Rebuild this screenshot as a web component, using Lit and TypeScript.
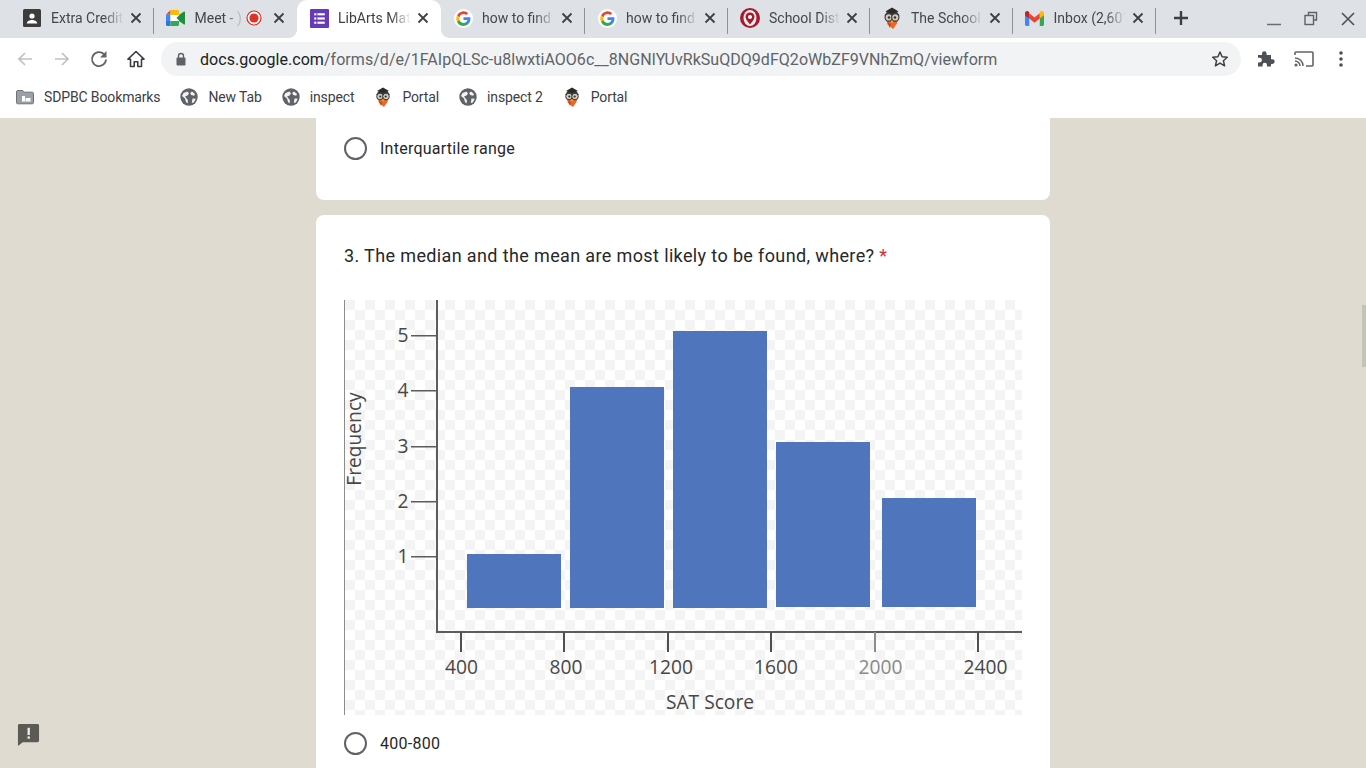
import { LitElement, html, css, svg } from "lit";
import { customElement } from "lit/decorators.js";

const googleG = svg`<svg width="19" height="19" viewBox="0 0 18 18"><circle cx="9" cy="9" r="9" fill="#fff"/><path fill="#4285f4" d="M15.6 9.2c0-.5 0-.9-.1-1.3H9v2.5h3.7a3.2 3.2 0 0 1-1.4 2.1v1.700h2.200c1.300-1.200 2.100-3 2.100-5z"/><path fill="#34a853" d="M9 16c1.900 0 3.400-.6 4.500-1.700l-2.200-1.700c-.6.4-1.400.7-2.300.7-1.800 0-3.300-1.200-3.800-2.800H2.900v1.700A6.800 6.800 0 0 0 9 16z"/><path fill="#fbbc05" d="M5.200 10.500a4.100 4.100 0 0 1 0-2.900V5.900H2.900a6.800 6.800 0 0 0 0 6.300z"/><path fill="#ea4335" d="M9 4.800c1 0 1.900.3 2.600 1l1.900-1.900A6.800 6.800 0 0 0 2.900 5.900l2.300 1.700C5.700 6 7.200 4.800 9 4.800z"/></svg>`;
const contact = svg`<svg width="18" height="18" viewBox="0 0 18 18"><rect width="18" height="18" rx="1.500" fill="#3c3c3c"/><circle cx="9" cy="7" r="2.600" fill="#fff"/><path d="M3.800 14.500c.3-2.600 3-3.500 5.200-3.500s4.900.9 5.200 3.500z" fill="#fff"/></svg>`;
const meet = svg`<svg width="19" height="16" viewBox="0 0 19 16"><path d="M4.500 0 0 4.500h4.500z" fill="#ea4335"/><path d="M4.500 0H11.500C12.300 0 13 .7 13 1.500V5H4.500z" fill="#fbbc05"/><path d="M0 4.500h4.500V11H0z" fill="#4285f4"/><path d="M0 11h4.500v5H1.500A1.500 1.500 0 0 1 0 14.500z" fill="#2a78d6"/><path d="M4.500 11H13v3.500c0 .8-.7 1.500-1.500 1.500h-7z" fill="#34a853"/><path d="M13 5v6l5 3.500c.5.300 1 0 1-.6V2.100c0-.6-.5-.9-1-.6z" fill="#1e8e3e"/><path d="M13 5H4.500v6H13z" fill="#fff"/><path d="M13 5.500 10.500 8 13 10.500z" fill="#1e8e3e"/></svg>`;
const rec = svg`<svg width="16" height="16" viewBox="0 0 16 16"><circle cx="8" cy="8" r="7" fill="#fff" stroke="#d93025" stroke-width="1.200"/><circle cx="8" cy="8" r="4.600" fill="#e03327"/></svg>`;
const forms = svg`<svg width="19" height="19" viewBox="0 0 18 18"><rect width="18" height="18" rx="1" fill="#673ab7"/><g fill="#fff"><rect x="4" y="4" width="2" height="2"/><rect x="7" y="4" width="7" height="2"/><rect x="4" y="8" width="2" height="2"/><rect x="7" y="8" width="7" height="2"/><rect x="4" y="12" width="2" height="2"/><rect x="7" y="12" width="7" height="2"/></g></svg>`;
const school = svg`<svg width="20" height="20" viewBox="0 0 20 20"><circle cx="10" cy="10" r="10" fill="#a6192e"/><ellipse cx="10" cy="10" rx="6.500" ry="8" fill="#f7eef0"/><path d="M10 4.500c2.800 0 4.500 2 4.500 4.300 0 2.800-2.500 5.200-4.500 7.700-2-2.500-4.500-4.900-4.500-7.700C5.500 6.500 7.200 4.500 10 4.500z" fill="#a6192e"/><circle cx="10" cy="9" r="2" fill="#fff"/></svg>`;
const owl = svg`<svg width="20" height="22" viewBox="0 0 18 20"><path d="M3 9 15 9 13.500 15 10 20 5 16z" fill="#e8682a"/><path d="M4 5C6 2 12 2 14 5L16 8 2 8z" fill="#3b3a36"/><path d="M3 4 9 .5 15 4 9 6z" fill="#2b2b28"/><circle cx="6" cy="9.500" r="3.300" fill="#cfcabb" stroke="#333" stroke-width="1"/><circle cx="12" cy="9.500" r="3.300" fill="#cfcabb" stroke="#333" stroke-width="1"/><circle cx="6.300" cy="9.500" r="1.100" fill="#333"/><circle cx="11.700" cy="9.500" r="1.100" fill="#333"/><path d="M8 12.500h2L9 15z" fill="#f2b632"/><path d="M5 14 8 15.500 7 19z" fill="#c4421a"/></svg>`;
const gmail = svg`<svg width="19" height="15" viewBox="0 0 18 14"><path d="M0 2v10.700C0 13.400.6 14 1.300 14H4V5z" fill="#4285f4"/><path d="M18 2v10.700c0 .7-.6 1.300-1.300 1.300H14V5z" fill="#34a853"/><path d="M4 7V2L9 6l5-4v5l-5 4z" fill="#ea4335"/><path d="M0 2c0-1.700 2-2.600 3.200-1.600L4 1v6L0 4z" fill="#c5221f"/><path d="M18 2c0-1.700-2-2.600-3.200-1.600L14 1v6l4-3z" fill="#fbbc05"/></svg>`;
const globe = svg`<svg width="18" height="18" viewBox="0 0 18 18"><circle cx="9" cy="9" r="8.700" fill="#5f6368"/><path d="M3.500 5 7.500 3.500 9 5.500 7.500 7.500 5 8.500 7 11 8 12.500 7.500 15.500 6 14 5 10.500 2 8zM12 3.500l3 2.500-.8 1.700-3-.7-1-2zM12.500 10.500l3.300.3-2 3.700-2 .5z" fill="#fff" opacity=".92"/></svg>`;
const folder = svg`<svg width="18" height="16" viewBox="0 0 18 16"><path d="M1.700 1.500h5l1.600 1.700h8c.6 0 1.200.6 1.200 1.200v9.300c0 .6-.6 1.100-1.200 1.100H1.700C1 14.800.5 14.300.5 13.700V2.700C.5 2 1 1.500 1.700 1.500z" fill="#9aa0a6" stroke="#6e7276"/><rect x="6" y="7" width="3" height="5.500" fill="#fff"/><rect x="9.500" y="9" width="5" height="3.500" fill="#fff"/></svg>`;

const tabs = [
  { t: "Extra Credit", icon: contact, cls: "", w: 143.5 },
  { t: "Meet - )", icon: meet, cls: "rec", w: 143.5 },
  { t: "LibArts Math", icon: forms, cls: "active", w: 144 },
  { t: "how to find", icon: googleG, cls: "", w: 144 },
  { t: "how to find", icon: googleG, cls: "", w: 143 },
  { t: "School District", icon: school, cls: "", w: 142 },
  { t: "The School", icon: owl, cls: "", w: 142.5 },
  { t: "Inbox (2,601)", icon: gmail, cls: "", w: 143.5 },
];
const marks = [
  { t: "SDPBC Bookmarks", i: folder },
  { t: "New Tab", i: globe },
  { t: "inspect", i: globe },
  { t: "Portal", i: owl },
  { t: "inspect 2", i: globe },
  { t: "Portal", i: owl },
];

@customElement("chart-image")
class ChartImage extends LitElement {
  static styles = css`
    :host { display: block; width: 678px; height: 415px; }
    svg { display: block; }
    text { font-family: "Open Sans", sans-serif; fill: #474747; font-size: 19.2px; }
    .lab { text-anchor: middle; }
  `;
  render() {
    const bars = [[123, 254, 94, 54], [226, 87, 94, 221], [329, 31, 94, 277], [432, 142, 94, 165], [538, 198, 94, 109]];
    const yt = [[5, 35], [4, 90], [3, 146], [2, 201], [1, 256]];
    const xt = [[116, "400", 117.5], [219, "800", 222], [323, "1200", 327], [426, "1600", 432], [530, "2000", 536.5], [633, "2400", 641.5]];
    return html`<svg width="678" height="415" viewBox="0 0 678 415">
      <defs><pattern id="c" width="20" height="20" patternUnits="userSpaceOnUse" x="1">
        <rect width="20" height="20" fill="#fff"/>
        <rect width="10" height="10" fill="#f4f4f4"/><rect x="10" y="10" width="10" height="10" fill="#f4f4f4"/>
      </pattern></defs>
      <rect width="678" height="415" fill="url(#c)"/>
      <rect width="1" height="415" fill="#8c8c8c"/>
      ${bars.map(b => svg`<rect x=${b[0]} y=${b[1]} width=${b[2]} height=${b[3]} fill="#4f76bd"/>`)}
      <rect x="92" y="0" width="2" height="333" fill="#5c5c5c"/>
      <rect x="92" y="331" width="586" height="2" fill="#5c5c5c"/>
      ${yt.map(y => svg`<rect x="67" y=${y[1]} width="26" height="1.500" fill="#5c5c5c"/><text class="lab" x="59" y=${(y[1] as number) + 7}>${y[0]}</text>`)}
      ${xt.map((x, i) => svg`<rect x=${x[0]} y="332" width="2" height="20" fill=${i === 4 ? "#8c8c8c" : "#4f4f4f"}/><text class="lab" x=${x[2]} y="374" style=${i === 4 ? "fill:#8a8a8a" : ""}>${x[1]}</text>`)}
      <text class="lab" x="366" y="409">SAT Score</text>
      <text class="lab" transform="translate(17 139) rotate(-90)">Frequency</text>
    </svg>`;
  }
}

@customElement("app-root")
export class AppRoot extends LitElement {
  static styles = css`
    :host { display: flex; flex-direction: column; width: 1366px; height: 768px; overflow: hidden; font-family: Roboto, sans-serif; position: relative; background: #dfdbd0; }
    .strip { height: 38px; background: #dee1e6; display: flex; padding-left: 10px; flex: none; align-items: stretch; }
    .tab { height: 38px; box-sizing: border-box; display: flex; align-items: center; padding: 0 12px 2px 12px; position: relative; flex: none; font-size: 14px; color: #45474a; }
    .tab::after { content: ""; position: absolute; right: 0; top: 8px; height: 26px; width: 1px; background: #8d9196; }
    .tab.active { background: #fff; border-radius: 10px 10px 0 0; color: #3c4043; }
    .tab.active::before, .tab.active::after { content: ""; position: absolute; bottom: 0; top: auto; width: 8px; height: 8px; }
    .tab.active::before { left: -8px; background: radial-gradient(circle at 0 0, transparent 7.5px, #fff 8px); }
    .tab.active::after { right: -8px; background: radial-gradient(circle at 100% 0, transparent 7.5px, #fff 8px); }
    .tab.pre::after { display: none; }
    .ic { width: 20px; display: flex; justify-content: center; align-items: center; flex: none; }
    .name { margin-left: 9px; flex: 1; overflow: hidden; white-space: nowrap; min-width: 0; -webkit-mask-image: linear-gradient(90deg, #000 72%, transparent 100%); mask-image: linear-gradient(90deg, #000 72%, transparent 100%); }
    .tab.rec .name { -webkit-mask-image: linear-gradient(90deg, #000 60%, #bbb 85%, #ccc 100%); mask-image: linear-gradient(90deg, #000 60%, rgba(0,0,0,.25) 85%, rgba(0,0,0,.2) 100%); }
    .recd { margin-right: 5px; display: flex; }
    .x { width: 12px; height: 12px; margin-left: 6px; flex: none; display: block; }
    .plus { width: 16px; height: 16px; margin: 10px 0 0 17px; }
    .winbtns { margin-left: auto; display: flex; align-items: center; gap: 21px; padding-right: 10px; }
    .toolbar { height: 42px; background: #fff; display: flex; align-items: center; flex: none; padding-left: 16px; }
    .nav { display: flex; align-items: center; gap: 19px; }
    .nav svg { display: block; }
    .omni { margin-left: 16px; width: 1080px; height: 34px; border-radius: 17px; background: #f1f3f4; display: flex; align-items: center; padding: 0 12px 0 13px; box-sizing: border-box; font-size: 16px; color: #5f6368; white-space: nowrap; letter-spacing: .04px; }
    .omni b { font-weight: 400; color: #202124; }
    .lock { margin-right: 12px; display: block; flex: none; }
    .star { margin-left: auto; display: block; }
    .tools { display: flex; align-items: center; gap: 19px; margin-left: 16px; }
    .tools svg { display: block; }
    .bar { height: 38px; background: #fff; display: flex; align-items: center; flex: none; padding: 0 0 4px 16px; box-sizing: border-box; font-size: 14px; letter-spacing: -.13px; color: #3c4043; gap: 20px; }
    .mark { display: flex; align-items: center; gap: 10px; white-space: nowrap; }
    .mark svg { display: block; width: 18px; }
    .page { flex: 1; display: flex; flex-direction: column; align-items: center; gap: 15px; overflow: hidden; min-height: 0; }
    .card { width: 734px; background: #fff; box-sizing: border-box; padding: 0 28px; flex: none; }
    .c1 { height: 82px; border-radius: 0 0 8px 8px; padding-top: 16px; }
    .c2 { border-radius: 8px 8px 0 0; padding-top: 28px; flex: 1; }
    .q { font-size: 18px; line-height: 26px; color: #26272a; letter-spacing: 0.37px; margin-bottom: 31px; }
    .req { color: #d93025; }
    .opt { display: flex; align-items: center; font-size: 16px; color: #26272a; height: 28px; letter-spacing: .25px; }
    .radio { width: 23px; height: 23px; border-radius: 50%; border: 2px solid #5f6368; box-sizing: border-box; margin-right: 13px; flex: none; }
    .c2 .opt { margin-top: 14px; }
    .thumb { position: absolute; right: 0; top: 305px; width: 4px; height: 62px; background: #c5c2b8; }
    .report { position: absolute; left: 17px; top: 723px; display: block; }
  `;
  render() {
    return html`
      <div class="strip">
        ${tabs.map((t, i) => html`<div class="tab ${t.cls === "active" ? "active" : ""} ${i === 1 ? "pre rec" : ""}" style="width:${t.w}px">
          <span class="ic">${t.icon}</span><span class="name">${t.t}</span>
          ${t.cls === "rec" ? html`<span class="recd">${rec}</span>` : ""}
          <svg class="x" viewBox="0 0 12 12"><path d="M1.500 1.500l9 9M10.500 1.500l-9 9" stroke="#3c4043" stroke-width="1.800" fill="none"/></svg>
        </div>`)}
        <svg class="plus" viewBox="0 0 16 16"><path d="M8 1v14M1 8h14" stroke="#3c4043" stroke-width="2.400" fill="none"/></svg>
        <div class="winbtns">
          <svg width="16" height="16" viewBox="0 0 16 16"><path d="M1 13.500h14" stroke="#6a6d71" stroke-width="1.500"/></svg>
          <svg width="16" height="16" viewBox="0 0 16 16"><path d="M5.500 4V1.500h8V9H11" fill="none" stroke="#5f6368" stroke-width="1.400"/><rect x="2" y="4.500" width="8.500" height="9" fill="none" stroke="#5f6368" stroke-width="1.400"/></svg>
          <svg width="16" height="16" viewBox="0 0 16 16"><path d="M2 2l12 12M14 2 2 14" stroke="#4d5054" stroke-width="1.600"/></svg>
        </div>
      </div>
      <div class="toolbar">
        <div class="nav">
          <svg width="18" height="18" viewBox="0 0 18 18"><path d="M16 9H3M9 3 3 9l6 6" fill="none" stroke="#bdc1c6" stroke-width="1.700"/></svg>
          <svg width="18" height="18" viewBox="0 0 18 18"><path d="M2 9h13M9 3l6 6-6 6" fill="none" stroke="#bdc1c6" stroke-width="1.700"/></svg>
          <svg width="18" height="18" viewBox="0 0 18 18"><path d="M16 9.500a7 7 0 1 1-2-5.300" fill="none" stroke="#5f6368" stroke-width="1.800"/><path d="M16.500 1v6.500H10z" fill="#5f6368"/></svg>
          <svg width="18" height="18" viewBox="0 0 18 18"><path d="M9 1.500 1 9.200h2.500V16.500h3.700v-4.700h3.600v4.700h3.700V9.200H17z" fill="none" stroke="#3c4043" stroke-width="1.600" stroke-linejoin="round"/></svg>
        </div>
        <div class="omni">
          <svg class="lock" width="14" height="14" viewBox="0 0 14 14"><rect x="2.500" y="5.500" width="9" height="8" rx="1" fill="#5f6368"/><path d="M4.500 6V4a2.500 2.500 0 0 1 5 0v2" fill="none" stroke="#5f6368" stroke-width="1.400"/></svg>
          <span><b>docs.google.com</b>/forms/d/e/1FAIpQLSc-u8lwxtiAOO6c__8NGNlYUvRkSuQDQ9dFQ2oWbZF9VNhZmQ/viewform</span>
          <svg class="star" width="18" height="18" viewBox="0 0 18 18"><path d="M9 2l2.100 4.800 5.200.5-3.900 3.400 1.200 5.100L9 13.100 4.400 15.800l1.200-5.100-3.900-3.400 5.200-.5z" fill="none" stroke="#3c4043" stroke-width="1.500" stroke-linejoin="round"/></svg>
        </div>
        <div class="tools">
          <svg width="18" height="18" viewBox="0 0 18 18"><path d="M1 6h4V4.500a2.300 2.300 0 0 1 4.600 0V6H14v4.200h1.300a2.400 2.400 0 0 1 0 4.800H14v2.500H10v-1.500a2.200 2.200 0 0 0-4.400 0V17.500H1v-4h1.500a2.400 2.400 0 0 0 0-4.800H1z" fill="#4d5155" transform="translate(0 -1)"/></svg>
          <svg width="20" height="18" viewBox="0 0 20 18"><path d="M1 5V3a1 1 0 0 1 1-1h16a1 1 0 0 1 1 1v12a1 1 0 0 1-1 1h-6" fill="none" stroke="#5f6368" stroke-width="1.600"/><path d="M1 8a8 8 0 0 1 8 8M1 11a5 5 0 0 1 5 5" fill="none" stroke="#5f6368" stroke-width="1.500"/><circle cx="2" cy="15" r="1.600" fill="#5f6368"/></svg>
          <svg width="16" height="18" viewBox="0 0 16 18"><circle cx="8" cy="3" r="1.800" fill="#4d5155"/><circle cx="8" cy="9" r="1.800" fill="#4d5155"/><circle cx="8" cy="15" r="1.800" fill="#4d5155"/></svg>
        </div>
      </div>
      <div class="bar">
        ${marks.map(m => html`<span class="mark">${m.i}<span>${m.t}</span></span>`)}
      </div>
      <div class="page">
        <div class="card c1"><div class="opt"><span class="radio"></span>Interquartile range</div></div>
        <div class="card c2">
          <div class="q">3. The median and the mean are most likely to be found, where? <span class="req">*</span></div>
          <chart-image></chart-image>
          <div class="opt"><span class="radio"></span>400-800</div>
        </div>
      </div>
      <div class="thumb"></div>
      <svg class="report" width="23" height="23" viewBox="0 0 24 24"><path d="M1 2.500C1 1.700 1.700 1 2.500 1h19c.8 0 1.500.7 1.500 1.500v16c0 .8-.7 1.500-1.500 1.500H6l-5 4z" fill="#5c5a55"/><rect x="11" y="5" width="2.400" height="7.500" fill="#eee"/><rect x="11" y="14" width="2.400" height="2.400" fill="#eee"/></svg>
    `;
  }
}
void ChartImage;
